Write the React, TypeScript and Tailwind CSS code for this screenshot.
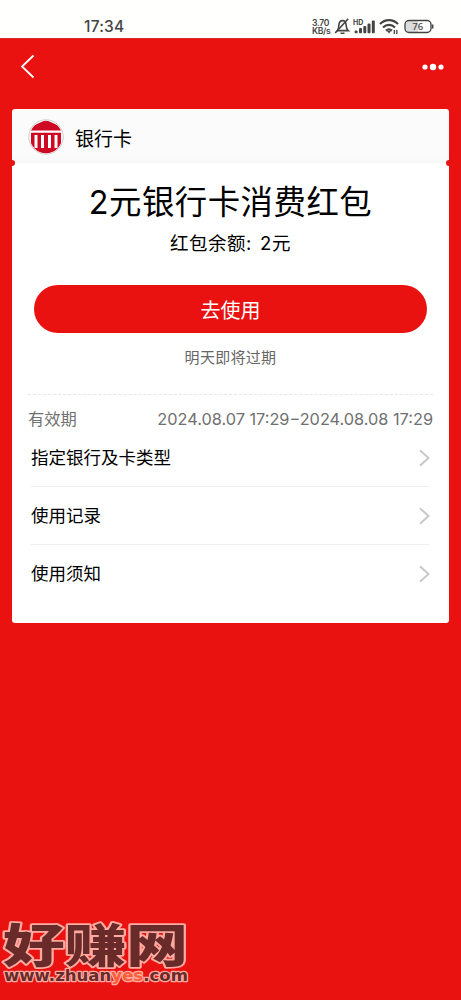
import React from 'react';

const rows = ['指定银行及卡类型', '使用记录', '使用须知'];

function StatusBar() {
  return (
    <div className="flex h-[38px] items-start bg-[#fffffd] pl-[84px] pr-[26px] text-[#444]">
      <span className="mt-[17px] text-[15.5px] font-medium leading-5 tracking-[0.2px]">17:34</span>
      <div className="ml-auto flex pt-[18px]">
        <div className="w-[19px] pt-[1px] text-[8.6px] font-semibold leading-[8px] tracking-[-0.3px] whitespace-nowrap">
          <div>3.70</div>
          <div>KB/s</div>
        </div>
        <svg className="ml-[3px]" width="17" height="17" viewBox="0 0 17 17" fill="none" stroke="#444" strokeWidth="1.6">
          <path d="M3.4 12.6C4.7 11.4 4.7 10 4.8 7.5C5 4.2 6.4 2.6 8.6 2.6C10.8 2.6 12 4.2 12.2 7.5C12.3 10 12.7 11.4 14.2 12.6Z" />
          <path d="M14.2.8L1.2 15M6.5 15.3H10.5" />
        </svg>
        <svg className="ml-[2px]" width="24" height="17" viewBox="0 0 24 17" fill="#444">
          <text x="0" y="6.5" fontSize="7" fontWeight="700" fontFamily="Inter">HD</text>
          <rect x="1.6" y="12.5" width="3" height="2.7" rx="1" />
          <rect x="6" y="10" width="3" height="5.2" rx="1" />
          <rect x="10.3" y="8" width="3" height="7.2" rx="1" />
          <rect x="14.5" y="5.5" width="3" height="9.7" rx="1" />
          <rect x="18.8" y="2.5" width="3" height="12.7" rx="1" />
        </svg>
        <svg className="ml-[2px]" width="21" height="17" viewBox="0 0 21 17" fill="none" stroke="#444" strokeWidth="2.2">
          <path d="M1 6C6 .8 14 .8 19 6M4 9.5C7.5 6 12.5 6 16 9.5M7 12.7C9 11 11 11 13 12.7" />
          <path d="M8 13L10 15.5L12 13Z" fill="#444" stroke="none" />
          <path d="M15.3 12V16M17.8 12V16" strokeWidth="1.3" />
        </svg>
        <svg className="ml-[4px] mr-[1px]" width="30" height="17" viewBox="0 0 30 17">
          <path d="M5 3H14V14H5Q2 14 2 11V6Q2 3 5 3Z" fill="#ddd" />
          <rect x="1" y="2.5" width="26" height="12" rx="4" fill="none" stroke="#444" strokeWidth="1.4" />
          <path d="M28.7 6.5V10.5" stroke="#444" strokeWidth="1.5" />
          <text x="13.8" y="12" fill="#444" fontSize="9.5" fontWeight="500" fontFamily="Noto Sans" textAnchor="middle">76</text>
        </svg>
      </div>
    </div>
  );
}

function BankIcon() {
  return (
    <svg width="36" height="36" viewBox="0 0 36 36">
      <circle cx="18" cy="18" r="17.2" fill="#fff" stroke="#b8b8b8" strokeWidth=".7" />
      <defs><clipPath id="bank"><circle cx="18" cy="18" r="16.2" /></clipPath></defs>
      <g clipPath="url(#bank)">
        <path d="M0 11.5V9L18 1L36 9V11.5Z" fill="#cf0824" />
        <path d="M3 13.8H33V36H3Z" fill="#cf0824" />
        <path d="M6.5 16H9.5V29H6.5ZM13 16H16V29H13ZM20 16H23V29H20ZM26.5 16H29.5V29H26.5Z" fill="#fff" />
      </g>
    </svg>
  );
}

function Chevron() {
  return (
    <svg width="12" height="18" viewBox="0 0 12 18" fill="none" stroke="#c8c8c8" strokeWidth="1.9">
      <path d="M2 1.2L10.5 9L2 16.8" />
    </svg>
  );
}

function Watermark() {
  return (
    <svg className="absolute left-0 top-[916px]" width="194" height="72" viewBox="0 0 194 72">
      <g paintOrder="stroke" stroke="#ffaaa0" strokeLinejoin="round" fill="#692a2a">
        <text x="3" y="46" fontSize="46" fontWeight="900" fontFamily="Noto Sans CJK SC" textLength="185" lengthAdjust="spacingAndGlyphs" strokeWidth="3.4">好赚网</text>
        <text x="4" y="65" fontSize="15.5" fontWeight="700" fontFamily="DejaVu Sans" textLength="184" lengthAdjust="spacingAndGlyphs" strokeWidth="2.6">
          www.zhuan<tspan fill="#ff5d39">yes</tspan>.com
        </text>
      </g>
    </svg>
  );
}

export default function App() {
  return (
    <main className="relative h-[1000px] w-[461px] overflow-hidden bg-[#e91210] font-['Inter','Noto_Sans_CJK_SC',sans-serif] text-black">
      <StatusBar />
      <header className="flex h-[71px] items-start justify-between border-t border-[#d92625] pl-[20px] pr-[17px]">
        <svg className="mt-[15px]" width="16" height="25" viewBox="0 0 16 25" fill="none" stroke="#fff" strokeWidth="1.8">
          <path d="M13.5 1.5L2 12.5L13.5 23.5" />
        </svg>
        <svg className="mt-[23px]" width="22" height="10" viewBox="0 0 22 10" fill="#fff">
          <circle cx="3" cy="5" r="2.6" /><circle cx="11" cy="5" r="3.2" /><circle cx="19" cy="5" r="2.6" />
        </svg>
      </header>
      <section className="relative mx-[12px]">
        <div className="flex h-[54px] items-center rounded-[3px] bg-gradient-to-b from-[#fbfbfb] from-85% to-[#f7f7f7] pl-[16px] pt-[2px]">
          <BankIcon />
          <span className="ml-[11px] pt-[5px] text-[19px] leading-7">银行卡</span>
        </div>
        <div className="h-[460px] rounded-[3px] bg-white">
          <h1 className="pt-[17px] text-center text-[32.4px] font-normal leading-[46px] tracking-[0.5px]">2元银行卡消费红包</h1>
          <p className="mt-[3px] text-center text-[18.5px] leading-7 tracking-[0.5px]">红包余额<span className="inline-block w-[14px] text-left">:</span>2元</p>
          <button className="mx-auto mt-[28px] block h-[48px] w-[393px] rounded-full bg-[#e91210] pt-[2px] text-[20px] leading-[48px] text-white">去使用</button>
          <p className="mt-[13px] text-center text-[15px] leading-6 text-[#666] tracking-[0.3px]">明天即将过期</p>
          <div className="mx-[16px] mt-[24px] border-t border-dashed border-[#e6e6e6]" />
          <div className="mx-[16px] mt-[11px] flex h-[26px] items-center justify-between whitespace-nowrap text-[16.3px] text-[#707070]">
            <span>有效期</span>
            <span>2024.08.07 17:29−2024.08.08 17:29</span>
          </div>
          <div className="mx-[19px] -mt-[3px]">
            {rows.map((label, i) => (
              <div key={label} className={i < 2 ? 'flex h-[58px] items-center justify-between border-b border-[#eee] text-[17.5px]' : 'flex h-[57px] items-center justify-between text-[17.5px]'}>
                <span className="pt-[2px]">{label}</span><Chevron />
              </div>
            ))}
          </div>
        </div>
        <span className="absolute -left-[3px] top-[51px] h-[6px] w-[6px] rounded-full bg-[#e91210]" />
        <span className="absolute -right-[3px] top-[51px] h-[6px] w-[6px] rounded-full bg-[#e91210]" />
      </section>
      <Watermark />
    </main>
  );
}
